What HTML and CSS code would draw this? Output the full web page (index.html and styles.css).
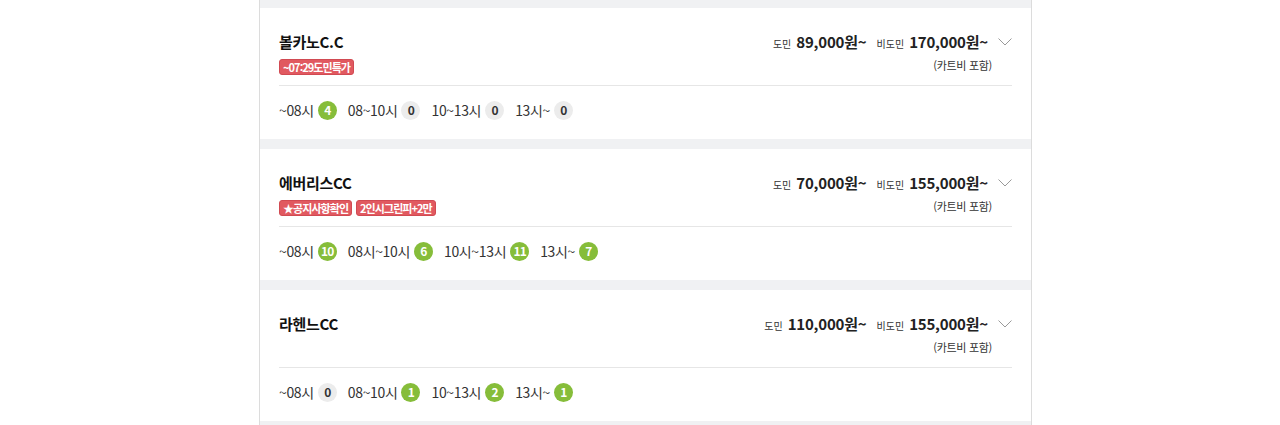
FILE: index.html
```html
<!DOCTYPE html>
<html lang="ko">
<head>
<meta charset="utf-8">
<link rel="stylesheet" href="styles.css">
</head>
<body>
<div class="list">
  <div class="sep"></div>
  <div class="card">
    <div class="head">
      <div class="info">
        <div class="title">볼카노C.C</div>
        <div class="tags"><span class="tag">~07:29도민특가</span></div>
      </div>
      <div class="prices">
        <div class="price-col">
          <div class="price-line"><span class="lbl">도민</span><span class="amt">89,000원~</span><span class="lbl lbl2">비도민</span><span class="amt">170,000원~</span></div>
          <div class="note">(카트비 포함)</div>
        </div>
        <svg class="chev" width="14" height="8" viewBox="0 0 14 8"><path d="M0.5 0.5 L7 7 L13.5 0.5" fill="none" stroke="#9a9a9a" stroke-width="1"/></svg>
      </div>
    </div>
    <div class="times">
      <span class="slot">~08시<b class="cnt on">4</b></span>
      <span class="slot">08~10시<b class="cnt">0</b></span>
      <span class="slot">10~13시<b class="cnt">0</b></span>
      <span class="slot">13시~<b class="cnt">0</b></span>
    </div>
  </div>
  <div class="sep tall"></div>
  <div class="card">
    <div class="head">
      <div class="info">
        <div class="title">에버리스CC</div>
        <div class="tags"><span class="tag">★공지사항확인</span><span class="tag">2인시그린피+2만</span></div>
      </div>
      <div class="prices">
        <div class="price-col">
          <div class="price-line"><span class="lbl">도민</span><span class="amt">70,000원~</span><span class="lbl lbl2">비도민</span><span class="amt">155,000원~</span></div>
          <div class="note">(카트비 포함)</div>
        </div>
        <svg class="chev" width="14" height="8" viewBox="0 0 14 8"><path d="M0.5 0.5 L7 7 L13.5 0.5" fill="none" stroke="#9a9a9a" stroke-width="1"/></svg>
      </div>
    </div>
    <div class="times">
      <span class="slot">~08시<b class="cnt on">10</b></span>
      <span class="slot">08시~10시<b class="cnt on">6</b></span>
      <span class="slot">10시~13시<b class="cnt on">11</b></span>
      <span class="slot">13시~<b class="cnt on">7</b></span>
    </div>
  </div>
  <div class="sep tall"></div>
  <div class="card">
    <div class="head">
      <div class="info">
        <div class="title">라헨느CC</div>
        <div class="tags"></div>
      </div>
      <div class="prices">
        <div class="price-col">
          <div class="price-line"><span class="lbl">도민</span><span class="amt">110,000원~</span><span class="lbl lbl2">비도민</span><span class="amt">155,000원~</span></div>
          <div class="note">(카트비 포함)</div>
        </div>
        <svg class="chev" width="14" height="8" viewBox="0 0 14 8"><path d="M0.5 0.5 L7 7 L13.5 0.5" fill="none" stroke="#9a9a9a" stroke-width="1"/></svg>
      </div>
    </div>
    <div class="times">
      <span class="slot">~08시<b class="cnt">0</b></span>
      <span class="slot">08~10시<b class="cnt on">1</b></span>
      <span class="slot">10~13시<b class="cnt on">2</b></span>
      <span class="slot">13시~<b class="cnt on">1</b></span>
    </div>
  </div>
  <div class="sep tall"></div>
</div>
</body>
</html>
```

FILE: styles.css
```css
* { box-sizing: border-box; }
html, body { margin: 0; padding: 0; background: #fff; }
body {
  font-family: "Noto Sans CJK KR", "Noto Sans", sans-serif;
  color: #222;
  overflow: hidden;
  height: 425px;
}
.list {
  width: 773px;
  margin-left: 259px;
  border-left: 1px solid #dcdcdc;
  border-right: 1px solid #dcdcdc;
  min-height: 425px;
}
.sep { height: 8px; background: #f0f1f3; }
.sep.tall { height: 10px; }
.card { padding: 0 19px 0 19px; background: #fff; }
.head {
  display: flex;
  justify-content: space-between;
  align-items: flex-start;
  padding-top: 23px;
  height: 78px;
  border-bottom: 1px solid #e6e6e6;
}
.title {
  font-size: 15px;
  font-weight: 700;
  line-height: 22px;
  color: #111;
  letter-spacing: -0.3px;
}
.tags { display: flex; gap: 4px; margin-top: 6px; height: 16px; }
.tag {
  display: inline-flex;
  align-items: center;
  height: 16px;
  padding: 0 3px;
  background: #e15960;
  border: 1px solid #d14a52;
  border-radius: 3px;
  color: #fff;
  font-size: 11px;
  font-weight: 700;
  letter-spacing: -0.95px;
  line-height: 1;
}
.prices { display: flex; align-items: flex-start; }
.price-col { display: flex; flex-direction: column; align-items: flex-end; }
.price-line { display: flex; align-items: baseline; line-height: 22px; }
.lbl { font-size: 10px; color: #333; margin-right: 5px; }
.lbl2 { margin-left: 10px; }
.amt { font-size: 15px; font-weight: 700; color: #222; letter-spacing: -0.2px; }
.note {
  font-size: 11px;
  color: #333;
  line-height: 14px;
  margin-top: 3px;
  margin-right: -4px;
  letter-spacing: -0.3px;
}
.chev { margin-left: 10px; margin-top: 7px; }
.times {
  display: flex;
  align-items: center;
  gap: 11px;
  padding: 14px 0 19px;
  height: 53px;
}
.slot {
  display: inline-flex;
  align-items: center;
  font-size: 14px;
  line-height: 20px;
  color: #333;
  letter-spacing: -0.35px;
}
.cnt {
  display: inline-flex;
  align-items: center;
  justify-content: center;
  width: 19px;
  height: 19px;
  margin-left: 4px;
  border-radius: 50%;
  background: #ececec;
  color: #333;
  font-size: 12px;
  font-weight: 700;
  letter-spacing: -0.8px;
}
.cnt.on { background: #86bd3a; color: #fff; }
```
